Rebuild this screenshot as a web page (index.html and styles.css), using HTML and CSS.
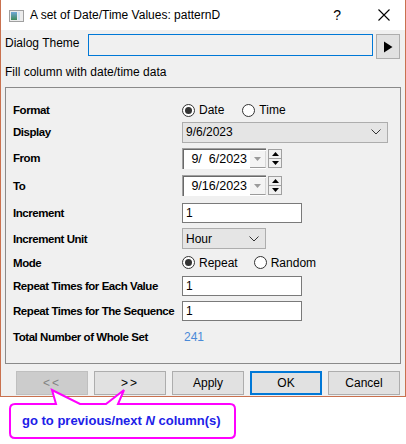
FILE: index.html
```html
<!DOCTYPE html>
<html>
<head>
<meta charset="utf-8">
<link rel="stylesheet" href="styles.css">
</head>
<body>
<div class="window">
  <div class="titlebar">
    <svg class="appicon" width="15" height="12" viewBox="0 0 15 12">
      <defs>
        <linearGradient id="g1" x1="0" y1="0" x2="0" y2="1">
          <stop offset="0" stop-color="#6fa7d8"/>
          <stop offset="1" stop-color="#3e8a5a"/>
        </linearGradient>
      </defs>
      <rect x="0.5" y="0.5" width="14" height="11" fill="#ececec" stroke="#a0a0a0"/>
      <rect x="2" y="2" width="6" height="8" fill="url(#g1)"/>
      <rect x="9" y="2" width="2" height="8" fill="#cfe3f3"/>
    </svg>
    <span class="title">A set of Date/Time Values: patternD</span>
    <span class="help">?</span>
    <svg class="close" width="12" height="12" viewBox="0 0 12 12">
      <path d="M0.5 0.5 L11.5 11.5 M11.5 0.5 L0.5 11.5" stroke="#000" stroke-width="1.1" fill="none"/>
    </svg>
  </div>
  <div class="body">
    <div class="theme-row">
      <span class="theme-label">Dialog Theme</span>
      <div class="theme-box"></div>
      <div class="theme-btn">
        <svg width="10" height="12" viewBox="0 0 10 12"><path d="M1 0.5 L9.5 6 L1 11.5 Z" fill="#000"/></svg>
      </div>
    </div>
    <div class="fill-label">Fill column with date/time data</div>
    <div class="group">
      <div class="grid">
        <div class="lbl">Format</div>
        <div class="ctl radios">
          <span class="radio on"></span><span class="rtext">Date</span>
          <span class="radio gap2"></span><span class="rtext">Time</span>
        </div>

        <div class="lbl">Display</div>
        <div class="ctl"><div class="combo wide"><span>9/6/2023</span><svg class="chev" width="10" height="6" viewBox="0 0 10 6"><path d="M0.5 0.5 L5 5 L9.5 0.5" stroke="#333" fill="none"/></svg></div></div>

        <div class="lbl">From</div>
        <div class="ctl">
          <div class="dtp">
            <div class="dtp-field"><span class="dtp-text">9/&nbsp;&nbsp;6/2023</span><span class="dtp-drop"><svg width="7" height="4" viewBox="0 0 7 4"><path d="M0 0 H7 L3.5 4 Z" fill="#9a9a9a"/></svg></span></div>
            <div class="spin"><span class="spin-up"><svg width="7" height="4" viewBox="0 0 7 4"><path d="M0 4 H7 L3.5 0 Z" fill="#000"/></svg></span><span class="spin-dn"><svg width="7" height="4" viewBox="0 0 7 4"><path d="M0 0 H7 L3.5 4 Z" fill="#000"/></svg></span></div>
          </div>
        </div>

        <div class="lbl">To</div>
        <div class="ctl">
          <div class="dtp">
            <div class="dtp-field"><span class="dtp-text">9/16/2023</span><span class="dtp-drop"><svg width="7" height="4" viewBox="0 0 7 4"><path d="M0 0 H7 L3.5 4 Z" fill="#9a9a9a"/></svg></span></div>
            <div class="spin"><span class="spin-up"><svg width="7" height="4" viewBox="0 0 7 4"><path d="M0 4 H7 L3.5 0 Z" fill="#000"/></svg></span><span class="spin-dn"><svg width="7" height="4" viewBox="0 0 7 4"><path d="M0 0 H7 L3.5 4 Z" fill="#000"/></svg></span></div>
          </div>
        </div>

        <div class="lbl">Increment</div>
        <div class="ctl"><div class="tbox">1</div></div>

        <div class="lbl">Increment Unit</div>
        <div class="ctl"><div class="combo narrow"><span>Hour</span><svg class="chev" width="10" height="6" viewBox="0 0 10 6"><path d="M0.5 0.5 L5 5 L9.5 0.5" stroke="#333" fill="none"/></svg></div></div>

        <div class="lbl">Mode</div>
        <div class="ctl radios">
          <span class="radio on"></span><span class="rtext">Repeat</span>
          <span class="radio gap3"></span><span class="rtext">Random</span>
        </div>

        <div class="lbl">Repeat Times for Each Value</div>
        <div class="ctl"><div class="tbox">1</div></div>

        <div class="lbl">Repeat Times for The Sequence</div>
        <div class="ctl"><div class="tbox">1</div></div>

        <div class="lbl">Total Number of Whole Set</div>
        <div class="ctl"><span class="total">241</span></div>
      </div>
    </div>
    <div class="buttons">
      <div class="btn disabled">&lt;&lt;</div>
      <div class="btn arrows">&gt;&gt;</div>
      <div class="btn">Apply</div>
      <div class="btn default">OK</div>
      <div class="btn">Cancel</div>
    </div>
  </div>
</div>
<div class="callout">
  <svg class="callout-shape" width="406" height="444" viewBox="0 0 406 444">
    <path d="M15 404 H56 L52 390 L80 404 H106 L124 390 L118 404 H230 Q235 404 235 409 V433 Q235 438 230 438 H15 Q10 438 10 433 V409 Q10 404 15 404 Z" fill="#fff" stroke="#ff00ff" stroke-width="2" stroke-linejoin="miter"/>
  </svg>
  <div class="callout-text">go to previous/next <i>N</i> column(s)</div>
</div>
</body>
</html>
```
FILE: styles.css
```css
html, body {
  margin: 0;
  padding: 0;
  background: #fff;
}
body {
  width: 406px;
  height: 444px;
  position: relative;
  overflow: hidden;
  font-family: "Liberation Sans", Arial, sans-serif;
  font-size: 12px;
  color: #000;
}
.window {
  width: 406px;
  height: 397px;
  box-sizing: border-box;
  border-left: 1px solid #c9714f;
  border-right: 1px solid #c9714f;
  border-bottom: 1px solid #c9714f;
  background: #f0f0f0;
  display: flex;
  flex-direction: column;
}
.titlebar {
  height: 30px;
  background: #fff;
  display: flex;
  align-items: center;
  flex: none;
}
.appicon {
  margin-left: 8px;
  margin-top: 1px;
}
.title {
  margin-left: 6px;
  font-size: 12px;
  line-height: 16px;
}
.help {
  margin-left: auto;
  font-size: 14px;
  line-height: 16px;
  margin-right: 37px;
}
.close {
  margin-right: 15px;
}
.body {
  padding: 0 4px;
  display: flex;
  flex-direction: column;
  flex: 1;
}
.theme-row {
  margin-top: 4px;
  display: flex;
  align-items: flex-start;
  height: 25px;
}
.theme-label {
  line-height: 18px;
  width: 83px;
}
.theme-box {
  width: 285px;
  height: 22px;
  box-sizing: border-box;
  border: 1px solid #0078d7;
  background: #f0f0f0;
}
.theme-btn {
  margin-left: 3px;
  width: 24px;
  height: 25px;
  box-sizing: border-box;
  border: 1px solid #adadad;
  background: #e1e1e1;
  display: flex;
  align-items: center;
  justify-content: center;
}
.fill-label {
  margin-top: 4px;
  line-height: 18px;
}
.group {
  margin-top: 6px;
  width: 396px;
  height: 277px;
  box-sizing: border-box;
  border: 1px solid #8a8a8a;
  padding: 12px 0 0 7px;
}
.grid {
  display: grid;
  grid-template-columns: 169px 1fr;
  grid-template-rows: 20px 24px 28px 27px 27px 25px 23px 24px 26px 26px;
  align-items: center;
}
.lbl {
  font-weight: bold;
  font-size: 11.5px;
  line-height: 16px;
  white-space: nowrap;
  letter-spacing: -0.45px;
}
.ctl {
  display: flex;
  align-items: center;
}
.radios .radio {
  width: 13px;
  height: 13px;
  box-sizing: border-box;
  border: 1px solid #333;
  border-radius: 50%;
  background: #fff;
  display: flex;
  align-items: center;
  justify-content: center;
  flex: none;
}
.radio.on::after {
  content: "";
  width: 7px;
  height: 7px;
  border-radius: 50%;
  background: #333;
}
.rtext {
  margin-left: 4px;
  line-height: 16px;
}
.radio.gap2 { margin-left: 18px; }
.radio.gap3 { margin-left: 16px; }
.combo {
  height: 21px;
  box-sizing: border-box;
  border: 1px solid #adadad;
  background: #e5e5e5;
  display: flex;
  align-items: center;
  padding: 0 6px 0 3px;
  justify-content: space-between;
}
.combo.wide { width: 206px; }
.combo.narrow { width: 84px; }
.dtp {
  display: flex;
  align-items: center;
  height: 22px;
}
.dtp-field {
  width: 84px;
  height: 21px;
  box-sizing: border-box;
  border-top: 1px solid #a0a0a0;
  border-left: 1px solid #a0a0a0;
  box-shadow: inset 1px 1px 0 #696969;
  background: #fff;
  display: flex;
  align-items: center;
  justify-content: flex-end;
}
.dtp-text {
  font-family: "Liberation Sans", Arial, sans-serif;
  font-size: 12.5px;
  margin-right: 3px;
  white-space: pre;
}
.dtp-drop {
  width: 16px;
  height: 17px;
  margin-top: 1px;
  box-sizing: border-box;
  background: #f4f4f4;
  border-bottom: 1px solid #9a9a9a;
  border-right: 1px solid #d8d8d8;
  display: flex;
  align-items: center;
  justify-content: center;
}
.spin {
  margin-left: 2px;
  width: 14px;
  height: 19px;
  display: flex;
  flex-direction: column;
  box-sizing: border-box;
  border: 1px solid #a0a0a0;
  background: #f0f0f0;
}
.spin-up, .spin-dn {
  flex: 1;
  display: flex;
  align-items: center;
  justify-content: center;
}
.spin-up { border-bottom: 1px solid #a0a0a0; }
.tbox {
  width: 120px;
  height: 20px;
  box-sizing: border-box;
  border: 1px solid #7a7a7a;
  background: #fff;
  padding-left: 3px;
  line-height: 18px;
}
.total {
  color: #4a8ad8;
  margin-left: 2px;
  line-height: 16px;
}
.buttons {
  margin-top: 7px;
  margin-left: 11px;
  display: flex;
  gap: 6px;
}
.btn {
  width: 72px;
  height: 24px;
  box-sizing: border-box;
  border: 1px solid #adadad;
  background: #e1e1e1;
  display: flex;
  align-items: center;
  justify-content: center;
  font-size: 12px;
}
.btn.disabled {
  background: #cccccc;
  border-color: #bfbfbf;
  color: #838383;
  letter-spacing: 2px;
}
.btn.arrows {
  letter-spacing: 2px;
}
.btn.default {
  border: 2px solid #0078d7;
}
.callout {
  position: absolute;
  left: 0;
  top: 0;
  width: 406px;
  height: 444px;
  pointer-events: none;
}
.callout-shape {
  position: absolute;
  left: 0;
  top: 0;
}
.callout-text {
  position: absolute;
  left: 22px;
  top: 412px;
  font-family: "Liberation Sans", Arial, sans-serif;
  font-weight: bold;
  font-size: 13px;
  line-height: 18px;
  color: #2020e8;
  white-space: nowrap;
}
```
